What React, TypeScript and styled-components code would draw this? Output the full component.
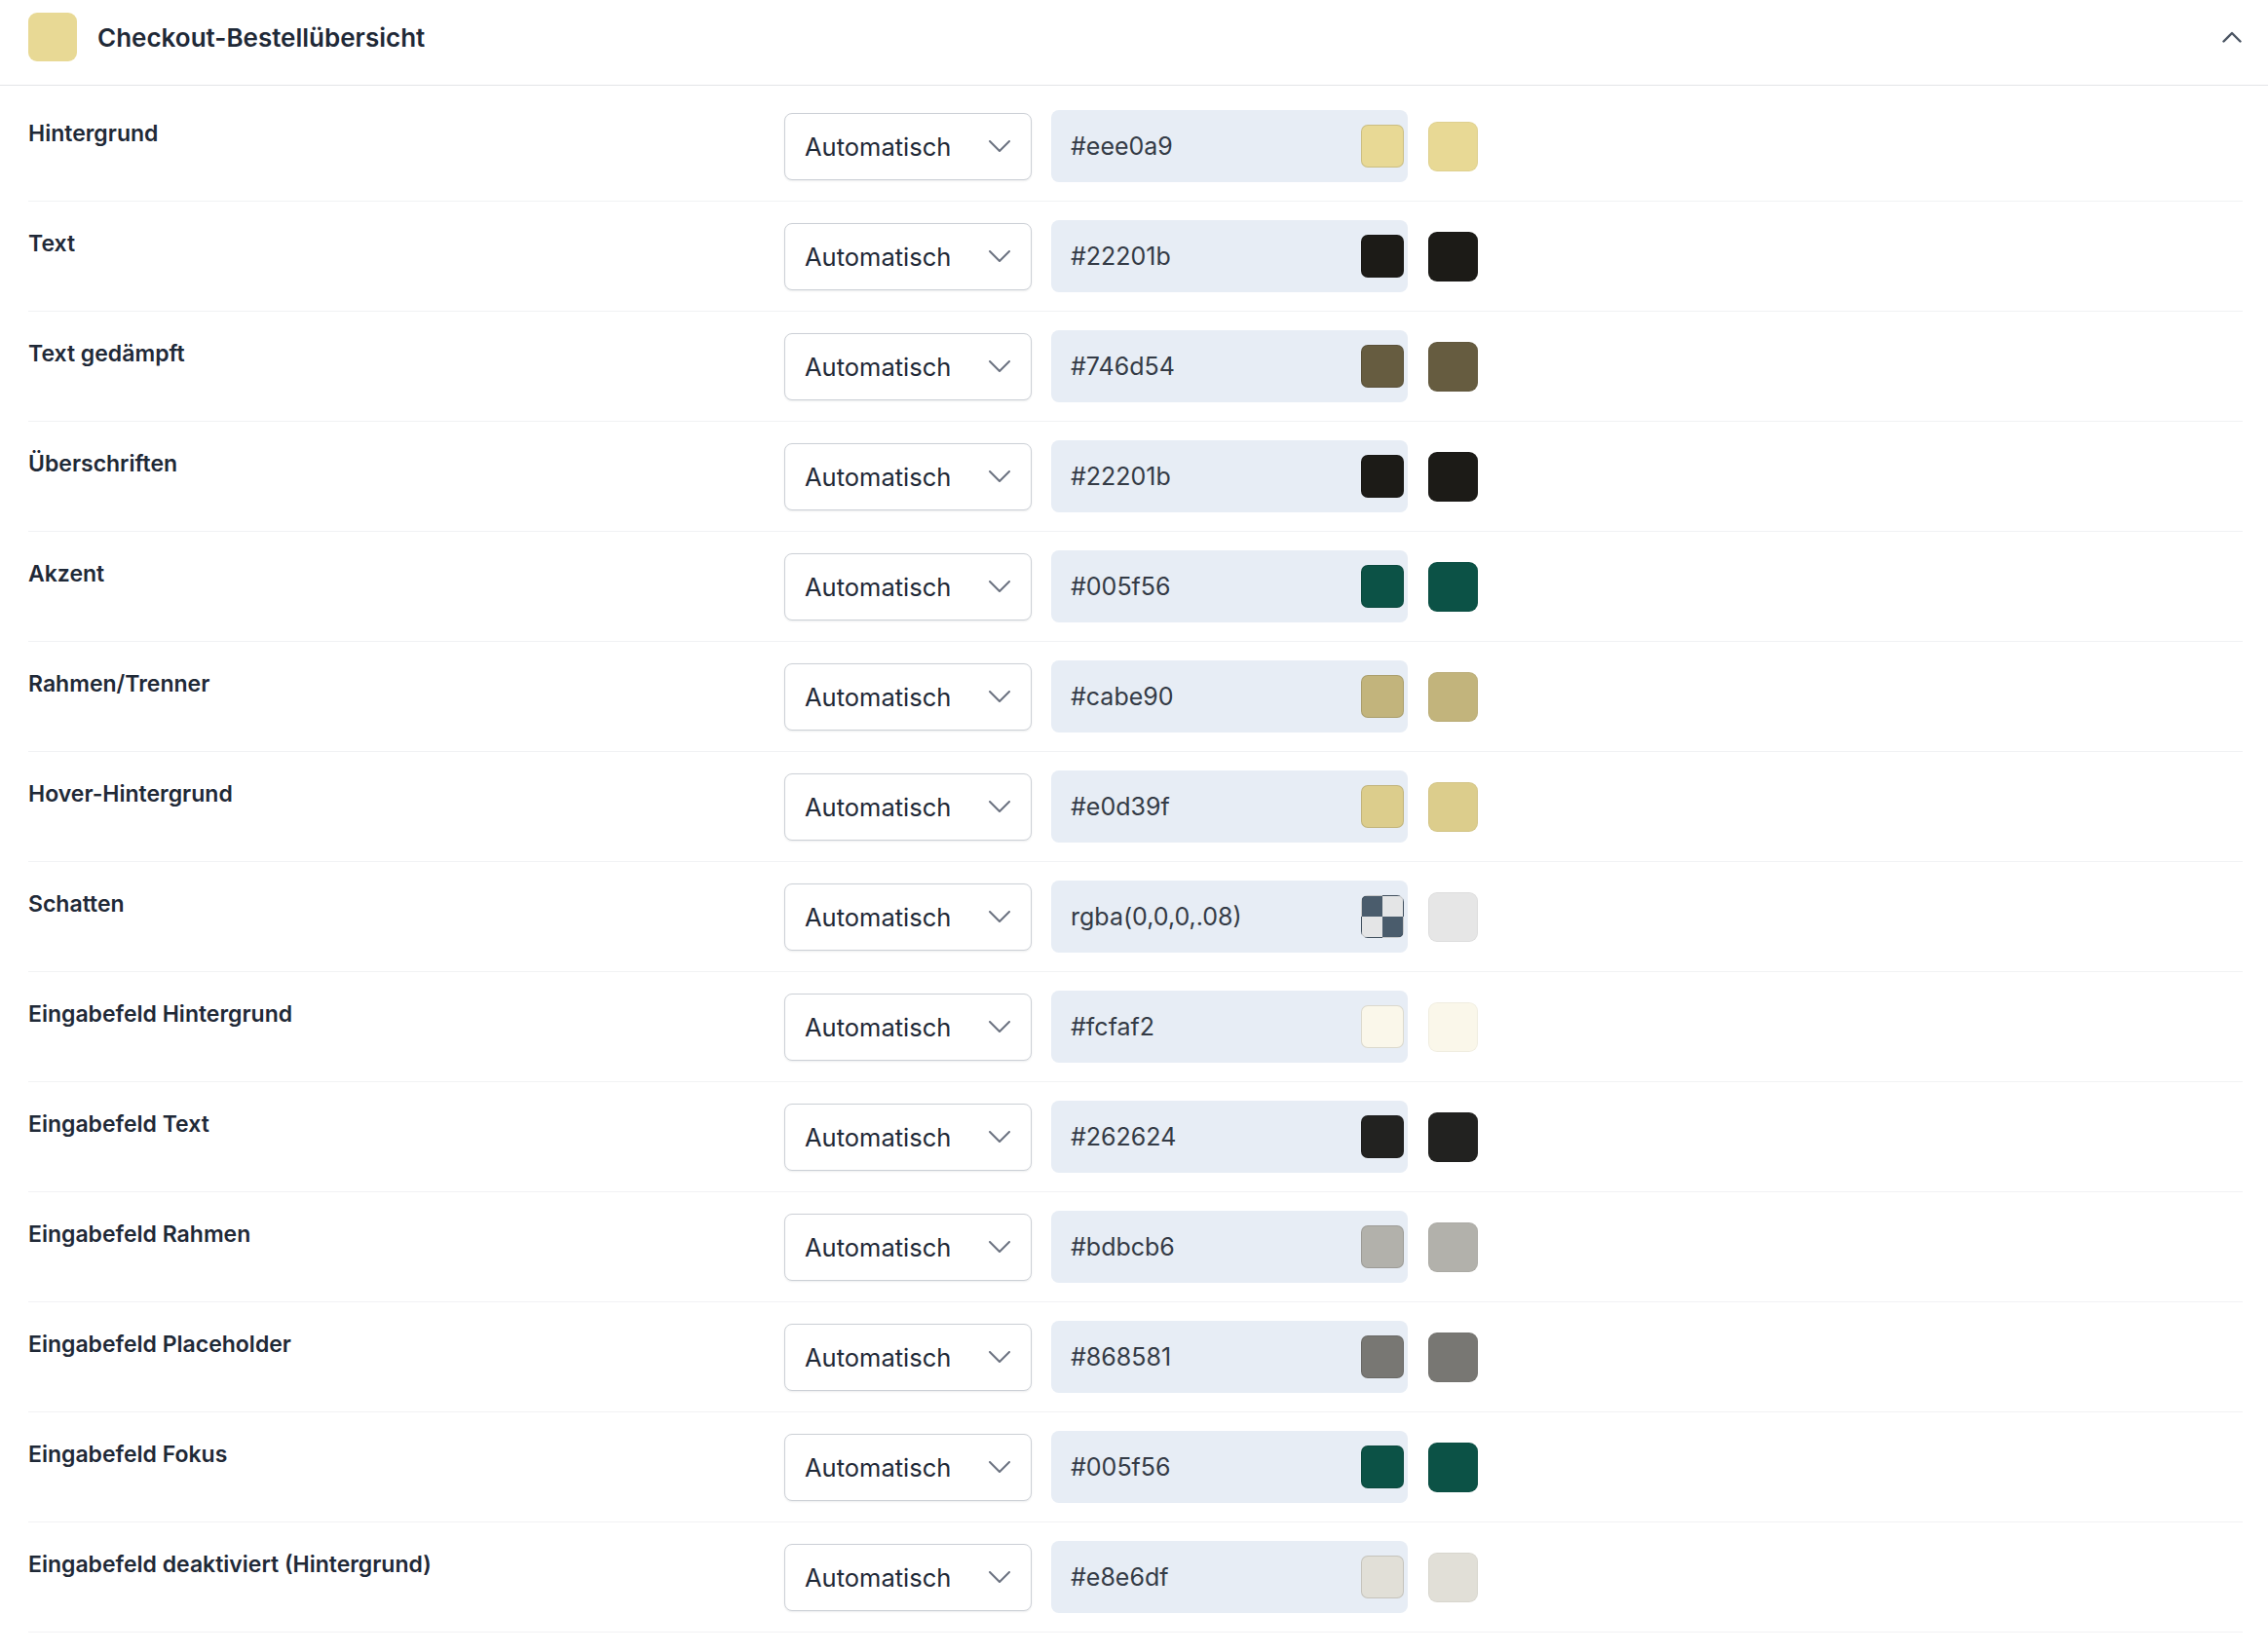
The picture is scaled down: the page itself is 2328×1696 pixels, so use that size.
import React from 'react';
import styled, { createGlobalStyle, css } from 'styled-components';

const GlobalStyle = createGlobalStyle`
  body {
    margin: 0;
    background: #ffffff;
    font-family: Inter, "Noto Sans", "Liberation Sans", sans-serif;
    color: #1f2937;
  }
`;

type ColorRow = {
  label: string,
  value: string,
  swatch: string,
  checker?: boolean,
};

// value is what the field shows, swatch is the tone painted in the preview chips
const rows: ColorRow[] = [
  { label: 'Hintergrund', value: '#eee0a9', swatch: '#e8d995' },
  { label: 'Text', value: '#22201b', swatch: '#1c1b17' },
  { label: 'Text gedämpft', value: '#746d54', swatch: '#665c40' },
  { label: 'Überschriften', value: '#22201b', swatch: '#1c1b17' },
  { label: 'Akzent', value: '#005f56', swatch: '#0c5246' },
  { label: 'Rahmen/Trenner', value: '#cabe90', swatch: '#c2b47c' },
  { label: 'Hover-Hintergrund', value: '#e0d39f', swatch: '#dccd8c' },
  { label: 'Schatten', value: 'rgba(0,0,0,.08)', swatch: '#e6e6e6', checker: true },
  { label: 'Eingabefeld Hintergrund', value: '#fcfaf2', swatch: '#faf7ea' },
  { label: 'Eingabefeld Text', value: '#262624', swatch: '#222220' },
  { label: 'Eingabefeld Rahmen', value: '#bdbcb6', swatch: '#b2b1ab' },
  { label: 'Eingabefeld Placeholder', value: '#868581', swatch: '#787773' },
  { label: 'Eingabefeld Fokus', value: '#005f56', swatch: '#0c5246' },
  { label: 'Eingabefeld deaktiviert (Hintergrund)', value: '#e8e6df', swatch: '#e1dfd7' },
];

const Panel = styled.section`
  width: 100%;
`;

const Header = styled.header`
  display: flex;
  align-items: center;
  padding: 13px 27px 24px 29px;
  border-bottom: 1px solid #e3e5e8;
`;

const HeaderSwatch = styled.span`
  width: 50px;
  height: 50px;
  border-radius: 9px;
  background: #e8d995;
  flex-shrink: 0;
`;

const Title = styled.h2`
  flex: 1;
  margin: 0 0 0 21px;
  font-size: 26px;
  font-weight: 600;
  color: #1f2937;
`;

const Collapse = styled.button`
  border: none;
  background: none;
  padding: 0;
  display: grid;
  place-items: center;
  cursor: pointer;
`;

const List = styled.div`
  padding: 6px 26px 0 29px;
`;

const Row = styled.div`
  display: grid;
  grid-template-columns: 756px 254px 366px 51px 1fr;
  column-gap: 20px;
  align-items: center;
  padding: 19px 0;
  border-bottom: 1px solid #f1f2f4;
`;

const Label = styled.div`
  align-self: start;
  margin-top: 8px;
  font-size: 23px;
  line-height: 32px;
  font-weight: 600;
  color: #1f2937;
`;

const Select = styled.div`
  box-sizing: border-box;
  height: 69px;
  display: flex;
  align-items: center;
  justify-content: space-between;
  padding: 0 21px 0 20px;
  border: 1px solid #ccd0d6;
  border-radius: 8px;
  background: #ffffff;
  box-shadow: 0 1px 2px rgba(15, 23, 42, 0.08);
  font-size: 25.5px;
  color: #1f2937;
`;

const ValueField = styled.div`
  box-sizing: border-box;
  height: 74px;
  display: flex;
  align-items: center;
  justify-content: space-between;
  padding: 0 4px 0 20px;
  border-radius: 8px;
  background: #e7edf5;
  font-size: 25px;
  color: #343b46;
`;

const swatchFill = css<{ $color: string, $checker?: boolean }>`
  background: ${({ $color, $checker }) => ($checker
    ? 'conic-gradient(#e4e5e6 0 25%, #4a5c6c 0 50%, #e4e5e6 0 75%, #4a5c6c 0)'
    : $color)};
`;

const InnerSwatch = styled.span<{ $color: string, $checker?: boolean }>`
  box-sizing: border-box;
  width: 44px;
  height: 44px;
  border-radius: 7px;
  border: 1px solid rgba(0, 0, 0, 0.12);
  ${swatchFill}
`;

const Preview = styled.span<{ $color: string }>`
  margin-left: 1px;
  width: 51px;
  height: 51px;
  border-radius: 9px;
  background: ${({ $color }) => $color};
  box-shadow: inset 0 0 0 1px rgba(0, 0, 0, 0.04);
`;

const ChevronDown = () => (
  <svg width="22" height="12" viewBox="0 0 22 12" fill="none">
    <polyline points="1,1 11,11 21,1" stroke="#6b7280" strokeWidth="2" strokeLinecap="round" strokeLinejoin="round" />
  </svg>
);

const ChevronUp = () => (
  <svg width="20" height="12" viewBox="0 0 20 12" fill="none">
    <polyline points="1.5,10.5 10,2 18.5,10.5" stroke="#4b5563" strokeWidth="2.4" strokeLinecap="round" strokeLinejoin="round" />
  </svg>
);

const App: React.FC = () => (
  <>
    <GlobalStyle />
    <Panel>
      <Header>
        <HeaderSwatch />
        <Title>Checkout-Bestellübersicht</Title>
        <Collapse aria-label="Einklappen">
          <ChevronUp />
        </Collapse>
      </Header>
      <List>
        {rows.map((row) => (
          <Row key={row.label}>
            <Label>{row.label}</Label>
            <Select>
              <span>Automatisch</span>
              <ChevronDown />
            </Select>
            <ValueField>
              <span>{row.value}</span>
              <InnerSwatch $color={row.swatch} $checker={row.checker} />
            </ValueField>
            <Preview $color={row.swatch} />
            <span />
          </Row>
        ))}
      </List>
    </Panel>
  </>
);

export default App;
